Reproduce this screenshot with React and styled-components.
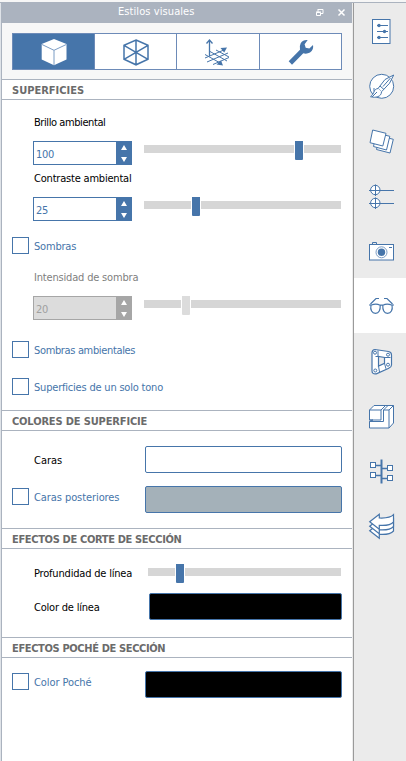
import React from "react";
import styled, { createGlobalStyle } from "styled-components";

const BLUE = "#4675aa";
const LINE = "#abb3bf";

const GlobalStyle = createGlobalStyle`
  * { box-sizing: border-box; }
  html, body { margin: 0; padding: 0; background: #fff; overflow: hidden; }
  body { font-family: "DejaVu Sans Condensed", "DejaVu Sans", sans-serif; font-stretch: condensed; font-size: 11px; line-height: 14px; }
`;

const Window = styled.div`
  width: 406px;
  height: 761px;
  display: flex;
  flex-direction: column;
  background: #f6f6f6;
  padding-top: 2px;
`;
const Body = styled.div`
  flex: 1;
  display: flex;
  border-top: 1px solid ${LINE};
`;
const Panel = styled.main`
  width: 353px;
  border-left: 1px solid #dfe3e8;
  border-right: 1px solid #ececec;
  background: #fff;
`;
const PanelInner = styled.div`
  height: 100%;
  border-left: 1px solid ${LINE};
`;
const TitleBar = styled.header`
  height: 20px;
  display: flex;
  align-items: center;
  background: ${LINE};
  color: #fff;
  padding: 0 6px 3px 116px;
`;
const WindowButtons = styled.div`
  margin-left: auto;
  display: flex;
  gap: 13px;
  padding-top: 1px;
`;
const Toolbar = styled.nav`
  height: 56px;
  background: #f7f7f7;
  padding: 10px 0 0 10px;
`;
const Tabs = styled.div`
  width: 330px;
  height: 37px;
  display: grid;
  grid-template-columns: 81px 81px 82px 81px;
  column-gap: 1px;
  padding: 1px;
  background: #6d8bb8;
`;
const Tab = styled.button`
  border: 0;
  padding: 0;
  display: flex;
  align-items: center;
  justify-content: center;
  background: ${(p) => (p.$active ? BLUE : "#fff")};
`;
const SectionTitle = styled.h2`
  margin: 0;
  height: 21px;
  padding: 3px 0 0 10px;
  border-top: 1px solid ${LINE};
  border-bottom: 1px solid ${LINE};
  color: #6b6b6b;
  font-size: 11px;
  font-weight: 700;
  line-height: 15px;
`;
const Text = styled.span`
  white-space: nowrap;
  letter-spacing: ${(p) => p.$track || 0}px;
`;
const Section = styled.section`
  height: ${(p) => p.$height}px;
  padding: ${(p) => p.$top}px 10px 0 10px;
`;
const Caption = styled.div`
  height: 14px;
  line-height: 16px;
  margin: 0 0 ${(p) => p.$gap}px 22px;
  color: ${(p) => (p.$muted ? "#808080" : "#000")};
`;
const Row = styled.div`
  display: flex;
  height: ${(p) => p.$height}px;
  margin-bottom: ${(p) => p.$gap || 0}px;
  padding-left: ${(p) => p.$indent || 0}px;
  align-items: ${(p) => p.$align || "center"};
  justify-content: space-between;
  line-height: 16px;
`;
const Spin = styled.div`
  width: 99px;
  height: 24px;
  display: flex;
  border: 1px solid ${(p) => (p.$disabled ? "#a6a6a6" : BLUE)};
  background: ${(p) => (p.$disabled ? "#dcdcdc" : "#fff")};
  color: ${(p) => (p.$disabled ? "#a0a0a0" : BLUE)};
`;
const SpinValue = styled.div`
  flex: 1;
  padding: 5px 0 0 2px;
`;
const SpinButtons = styled.div`
  width: 15px;
  display: flex;
  flex-direction: column;
  align-items: center;
  gap: 7px;
  padding-top: 3px;
  background: ${(p) => (p.$disabled ? "#a6a6a6" : BLUE)};
`;
const Arrow = styled.i`
  width: 0;
  height: 0;
  border-left: 3px solid transparent;
  border-right: 3px solid transparent;
  ${(p) => (p.$down ? "border-top" : "border-bottom")}: 5px solid #fff;
`;
const SliderBox = styled.div`
  display: flex;
  align-items: flex-start;
  width: ${(p) => p.$width}px;
  height: 19px;
  margin-right: 1px;
`;
const Track = styled.div`
  height: 8px;
  margin-top: 4px;
  background: #d6d6d6;
  flex: ${(p) => (p.$length ? `0 0 ${p.$length}px` : "1")};
`;
const Thumb = styled.div`
  width: 8px;
  height: 19px;
  margin: 0 1px;
  border-radius: 0 0 1px 1px;
  background: ${(p) => (p.$disabled ? "#dcdcdc" : BLUE)};
`;
const CheckLabel = styled.label`
  display: flex;
  align-items: center;
  gap: 5px;
  height: 17px;
  color: ${BLUE};
  line-height: 16px;
  align-self: ${(p) => (p.$raised ? "flex-start" : "auto")};
  margin-top: ${(p) => (p.$raised ? 2 : 0)}px;
`;
const CheckText = styled(Text)`
  padding-top: 2px;
`;
const RowText = styled(Text)`
  padding-top: 2px;
`;
const Box = styled.span`
  width: 17px;
  height: 17px;
  border: 1px solid ${BLUE};
  background: #fff;
`;
const Swatch = styled.div`
  width: ${(p) => p.$width || 197}px;
  height: 27px;
  border: 1px solid ${BLUE};
  border-radius: 2px;
  background: ${(p) => p.$color};
`;
const Sidebar = styled.aside`
  width: 53px;
  border-left: 1px solid #9a9a9a;
  background: #ebebeb;
`;
const SideItem = styled.div`
  height: 55px;
  padding: 14px 0 0 14px;
  background: ${(p) => (p.$active ? "#fff" : "transparent")};
`;
const Drawing = styled.svg`
  display: block;
  fill: none;
  stroke: ${BLUE};
  stroke-width: 1;
`;

const Slider = ({ width = 197, value, disabled }) => (
  <SliderBox $width={width}>
    <Track $length={value} />
    <Thumb $disabled={disabled} />
    <Track />
  </SliderBox>
);

const Spinner = ({ value, disabled }) => (
  <Spin $disabled={disabled}>
    <SpinValue><Text $track={-0.3}>{value}</Text></SpinValue>
    <SpinButtons $disabled={disabled}>
      <Arrow />
      <Arrow $down />
    </SpinButtons>
  </Spin>
);

const Check = ({ children, track, raised }) => (
  <CheckLabel $raised={raised}>
    <Box />
    <CheckText $track={track}>{children}</CheckText>
  </CheckLabel>
);

const tabIcons = [
  <>
    <path d="M14 1 26.5 6v15.5L14 27.2 1.7 21.5V6Z" fill="#fff" stroke="none" />
    <path d="M2 6.5 14 12.3 26.3 6.5M14 12.3V27" stroke="#7b9cc4" />
  </>,
  <path d="M14 2 26 7.3v14L14 26.8 2 21.3v-14ZM14 2v25M2 7.3l24 14M26 7.3l-24 14" strokeWidth="1.5" />,
  <>
    <path d="M5.500 2v16M2.500 5.500 5.500 2l3 3.500" strokeWidth="1.300" />
    <path d="M1 20 21 11.500M3 24l21-9M9 26.500 25 19.500M1 16.500 18 26M6 13.500l17 9.500M12 12l13 7" />
    <path d="m16.500 10 6.500-.5-2.800 5ZM12.500 26.500l6.500 1-2-5Z" fill={BLUE} stroke="none" />
  </>,
  <path d="M1.700 23.300 13 11.800Q12.200 8 13.700 5.200 16 1.700 20.700 2.100L17.600 6.200 18.700 9.800 22.300 10.400 26 7.100Q27 12 23 14.500 19.800 16.300 16.300 15.300L5 26.700Z" fill={BLUE} stroke="none" />,
];

const sideIcons = [
  <>
    <rect x="4.500" y="2.500" width="17.500" height="24" fill="#fff" />
    <path d="M9 8.500h11M9 14.500h11M9 20.500h11" />
    <g fill={BLUE} stroke="none"><circle cx="11" cy="8.500" r="1.700" /><circle cx="16.500" cy="14.500" r="1.700" /><circle cx="11" cy="20.500" r="1.700" /></g>
  </>,
  <>
    <circle cx="13.700" cy="14.300" r="12" fill="#fff" />
    <path d="M25.700 3 17 7.500 10 16.500l3.500 3.300 8-8.500Z" fill="#fff" />
    <path d="M22.500 6 15 14.500M12 14l4 3.500" />
    <path d="M10 16.500c-5 .7-3 5-7.500 8.200 5 1.500 11 0 11-4.900M6 16v3.500M4 25l5-5" fill="#fff" />
  </>,
  <g fill="#fff">
    <path d="m12 9 13.300 3.300L22 26 8.500 22.500Z" />
    <path d="m8.500 6 13.300 3.300L18.500 23 5.500 19.500Z" />
    <path d="M4.700 3 18 6.300 14.800 19 2 15.700Z" />
  </g>,
  <>
    <circle cx="7.300" cy="8" r="4.700" fill="#fff" />
    <circle cx="7.300" cy="21" r="4.700" fill="#fff" />
    <path d="M1 8.500h25M1 21.500h25M7.500 2.500v11.500M7.500 15.500v11.500" />
  </>,
  <>
    <path d="M4.500 7V5.500h4V7" />
    <rect x="1.500" y="7.500" width="24" height="15.500" fill="#fff" />
    <circle cx="13.500" cy="15.300" r="5.500" stroke="#7b9cc4" />
    <circle cx="13.500" cy="15.300" r="3.700" fill={BLUE} stroke="none" />
    <path d="M21 10.500h3" />
  </>,
  <path d="M1 13h2.500Q8 11 12.200 13.200h2.600Q19 11 23.500 13H26M3 13c-1 5 1 8.300 4.500 8.300S12.500 18 12.200 13.200M14.800 13.200c-.3 4.800 1.200 8.100 4.700 8.100s5.500-3.300 4.500-8.300M2.500 12 8 6.500h3M24.500 12 19 6.500h-3" strokeWidth="1.200" />,
  <>
    <path d="M7 2.500 20.500 4.500Q23.500 5 23.500 8v10Q23.300 20.500 20.800 21.200L8.300 26.800Q4 27.500 4 23.700v-18Q4.200 2.700 7 2.500ZM10.500 9.500v9.500l6-2.700V10.500Z" fill="#fff" fillRule="evenodd" strokeWidth="1.200" />
    <path d="M10 3.500v6M7.500 9.500h3M16.500 10.500l6 0M16.500 16.300l1.500 5.500M10.500 19l1 6" />
    <g fill="#fff"><circle cx="7" cy="5.700" r="1.500" /><circle cx="20" cy="7.700" r="1.500" /><circle cx="20" cy="17.700" r="1.500" /><circle cx="7.300" cy="23.500" r="1.500" /></g>
  </>,
  <>
    <path d="M1.500 8 6 3.500h19.500V21L21 26H1.500v-6.500l3.500-1.500H1.500Z" fill="#fff" />
    <path d="M1.500 8h11.500v10H1.500M13 8l4.500-4.500M15.500 8H21v18M15.500 8 20 3.500M21 8l4.500-4.500M15.500 8v11.500H1.500" />
  </>,
  <>
    <path d="M13.500 2.500v24" strokeWidth="2" />
    <path d="M8 8.500h5M8 18.500h5M14 11.500h5M14 21.500h5" strokeWidth="1.300" />
    <g fill="#fff"><rect x="2.500" y="5.500" width="5" height="5" /><rect x="2.500" y="15.500" width="5" height="5" /><rect x="19.500" y="8.500" width="5" height="5" /><rect x="19.500" y="18.500" width="5" height="5" /></g>
  </>,
  <g fill="#fff" strokeWidth="1.200">
    {[9, 4.5, 0].map((y) => (
      <path key={y} transform={`translate(0 ${y})`} d="M1.700 9.700 11.300 2.300V6Q22 6.500 25.500 2.700V10Q22 14 11.300 13.300V17.300Z" />
    ))}
  </g>,
];

export default function App() {
  return (
    <>
      <GlobalStyle />
      <Window>
        <Body>
          <Panel>
            <PanelInner>
              <TitleBar>
                <Text $track={0.08}>Estilos visuales</Text>
                <WindowButtons>
                  <Drawing width="9" height="9" viewBox="0 0 9 9">
                    <path d="M3 1.500h5v4H6M1.500 4.500h4v3h-4ZM3 1v3M1 4h5" stroke="#fff" />
                  </Drawing>
                  <Drawing width="9" height="9" viewBox="0 0 9 9">
                    <path d="m1.500 1.500 6 6m0-6-6 6" stroke="#fff" strokeWidth="1.500" />
                  </Drawing>
                </WindowButtons>
              </TitleBar>
              <Toolbar>
                <Tabs>
                  {tabIcons.map((icon, i) => (
                    <Tab key={i} $active={i === 0}>
                      <Drawing width="28" height="28" viewBox="0 0 28 28">{icon}</Drawing>
                    </Tab>
                  ))}
                </Tabs>
              </Toolbar>

              <SectionTitle><Text>SUPERFICIES</Text></SectionTitle>
              <Section $height={310} $top={15}>
                <Caption $gap={12}><Text $track={-0.42}>Brillo ambiental</Text></Caption>
                <Row $height={24} $indent={21} $align="flex-start" $gap={6}>
                  <Spinner value="100" /><Slider value={150} />
                </Row>
                <Caption $gap={12}><Text $track={-0.2}>Contraste ambiental</Text></Caption>
                <Row $height={24} $indent={21} $align="flex-start" $gap={16}>
                  <Spinner value="25" /><Slider value={47} />
                </Row>
                <Row $height={17} $gap={16}><Check track={-0.2}>Sombras</Check></Row>
                <Caption $gap={12} $muted><Text $track={-0.18}>Intensidad de sombra</Text></Caption>
                <Row $height={24} $indent={21} $align="flex-start" $gap={21}>
                  <Spinner value="20" disabled /><Slider value={37} disabled />
                </Row>
                <Row $height={17} $gap={20}><Check track={-0.35}>Sombras ambientales</Check></Row>
                <Row $height={17}><Check track={-0.2}>Superficies de un solo tono</Check></Row>
              </Section>

              <SectionTitle><Text $track={-0.15}>COLORES DE SUPERFICIE</Text></SectionTitle>
              <Section $height={97} $top={15}>
                <Row $height={27} $indent={22} $gap={13}><RowText>Caras</RowText><Swatch $color="#fff" /></Row>
                <Row $height={27}><Check raised track={-0.08}>Caras posteriores</Check><Swatch $color="#a4b1b9" /></Row>
              </Section>

              <SectionTitle><Text $track={-0.34}>EFECTOS DE CORTE DE SECCIÓN</Text></SectionTitle>
              <Section $height={88} $top={15}>
                <Row $height={19} $indent={22} $gap={10}><Text $track={-0.19}>Profundidad de línea</Text><Slider width={193} value={27} /></Row>
                <Row $height={27} $indent={22}><RowText $track={-0.2}>Color de línea</RowText><Swatch $width={193} $color="#000" /></Row>
              </Section>

              <SectionTitle><Text $track={-0.36}>EFECTOS POCHÉ DE SECCIÓN</Text></SectionTitle>
              <Section $height={100} $top={13}>
                <Row $height={27}><Check raised track={-0.08}>Color Poché</Check><Swatch $color="#000" /></Row>
              </Section>
            </PanelInner>
          </Panel>
          <Sidebar>
            {sideIcons.map((icon, i) => (
              <SideItem key={i} $active={i === 5}>
                <Drawing width="27" height="28" viewBox="0 0 27 28">{icon}</Drawing>
              </SideItem>
            ))}
          </Sidebar>
        </Body>
      </Window>
    </>
  );
}
